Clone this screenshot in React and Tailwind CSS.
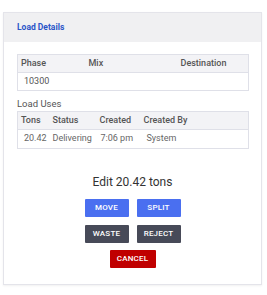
const btn = 'h-[18px] w-[44px] text-[8px] font-medium text-white tracking-wide flex items-center justify-center rounded-[1px]'

function App() {
  return (
    <div className="w-[267px] h-[295px] bg-white pt-[12px] px-[3px] font-['Roboto',sans-serif]">
      <div className="w-[259px] border border-[#e4e4ea] bg-white shadow-[0_1px_2px_rgba(0,0,0,0.06)] pb-[16px]">
        <div className="h-[29px] bg-[#f0f0f2] flex items-center px-[13px]">
          <span className="text-[8.5px] font-bold text-[#2a55c8]">Load Details</span>
        </div>

        <div className="px-[13px] pt-[12px]">
          <table className="w-[232px] border border-[#dfe0e8] text-[9px] text-[#444]">
            <thead>
              <tr className="h-[18px] bg-[#f3f3f6] border-b border-[#dfe0e8] text-[#555]">
                <th className="text-left pl-[3px] w-[71px] font-medium">Phase</th>
                <th className="text-left w-[92px] font-medium">Mix</th>
                <th className="text-left font-medium">Destination</th>
              </tr>
            </thead>
            <tbody>
              <tr className="h-[18px] text-[#555]">
                <td className="pl-[6px]">10300</td>
                <td></td>
                <td></td>
              </tr>
            </tbody>
          </table>

          <div className="mt-[6px] text-[9.5px] text-[#555] leading-[14px]">Load Uses</div>
          <table className="w-[232px] border border-[#dfe0e8] text-[9px] text-[#444]">
            <thead>
              <tr className="h-[18px] bg-[#f3f3f6] border-b border-[#dfe0e8] text-[#555]">
                <th className="text-left pl-[3px] w-[35px] font-medium">Tons</th>
                <th className="text-left w-[47px] font-medium">Status</th>
                <th className="text-left w-[44px] font-medium">Created</th>
                <th className="text-left font-medium">Created By</th>
              </tr>
            </thead>
            <tbody>
              <tr className="h-[19px] text-[#666]">
                <td className="pl-[6px]">20.42</td>
                <td>Delivering</td>
                <td className="pl-[1px]">7:06 pm</td>
                <td className="pl-[3px]">System</td>
              </tr>
            </tbody>
          </table>
        </div>

        <div className="mt-[25px] text-center text-[12px] text-[#333] leading-[16px]">Edit 20.42 tons</div>

        <div className="mt-[9px] flex flex-col items-center gap-[7.5px]">
          <div className="flex gap-[8px]">
            <button className={btn + ' bg-[#4a6ff0]'}>MOVE</button>
            <button className={btn + ' bg-[#4a6ff0]'}>SPLIT</button>
          </div>
          <div className="flex gap-[8px]">
            <button className={btn + ' bg-[#474a58]'}>WASTE</button>
            <button className={btn + ' bg-[#474a58]'}>REJECT</button>
          </div>
          <button className={btn + ' bg-[#c00000] w-[46px]'}>CANCEL</button>
        </div>
      </div>
    </div>
  )
}

export default App
